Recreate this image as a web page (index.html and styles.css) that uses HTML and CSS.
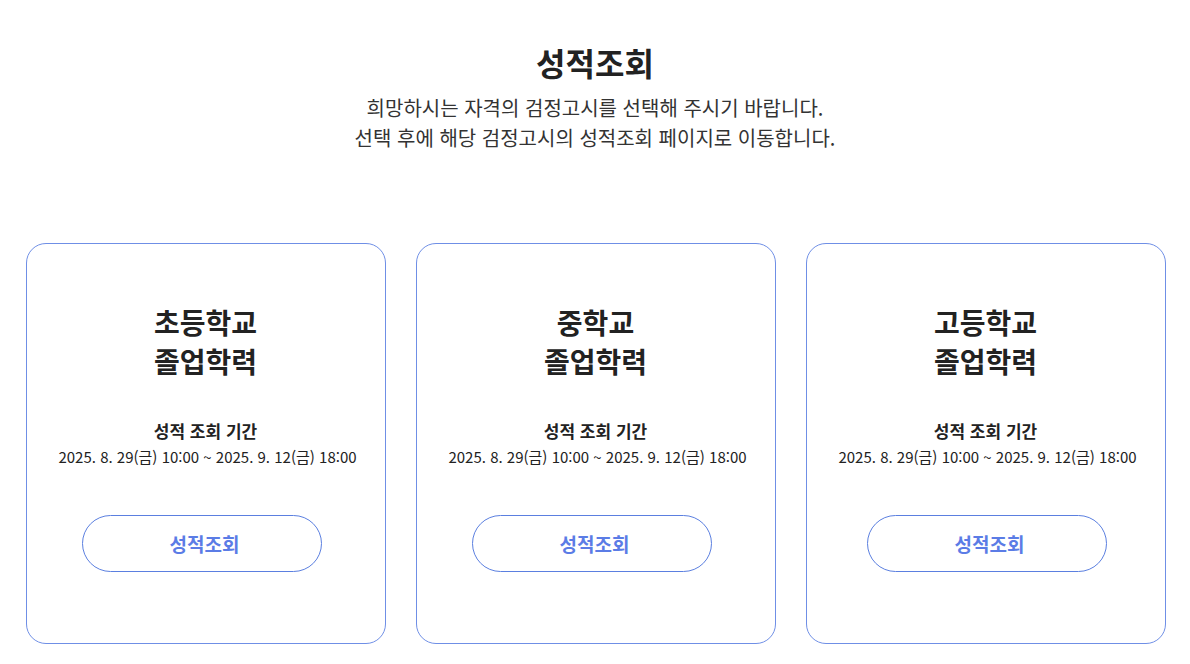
FILE: index.html
```html
<!DOCTYPE html>
<html lang="ko">
<head>
  <meta charset="UTF-8" />
  <meta name="viewport" content="width=device-width, initial-scale=1.0"/>
  <title>성적조회</title>
  <link rel="stylesheet" href="styles.css">
</head>
<body>
  <div class="page-head">
    <h1 class="page-title">성적조회</h1>
    <p class="page-desc">희망하시는 자격의 검정고시를 선택해 주시기 바랍니다.<br>선택 후에 해당 검정고시의 성적조회 페이지로 이동합니다.</p>
  </div>

  <div class="card-list">
    <div class="card">
      <h2 class="card-title">초등학교<br>졸업학력</h2>
      <div class="period">
        <strong class="period-label">성적 조회 기간</strong>
        <span class="period-date">2025. 8. 29(금) 10:00 ~ 2025. 9. 12(금) 18:00</span>
      </div>
      <a class="btn-result" href="#">성적조회</a>
    </div>

    <div class="card">
      <h2 class="card-title">중학교<br>졸업학력</h2>
      <div class="period">
        <strong class="period-label">성적 조회 기간</strong>
        <span class="period-date">2025. 8. 29(금) 10:00 ~ 2025. 9. 12(금) 18:00</span>
      </div>
      <a class="btn-result" href="#">성적조회</a>
    </div>

    <div class="card">
      <h2 class="card-title">고등학교<br>졸업학력</h2>
      <div class="period">
        <strong class="period-label">성적 조회 기간</strong>
        <span class="period-date">2025. 8. 29(금) 10:00 ~ 2025. 9. 12(금) 18:00</span>
      </div>
      <a class="btn-result" href="#">성적조회</a>
    </div>
  </div>
</body>
</html>
```

FILE: styles.css
```css
body {
  font-family: "Noto Sans CJK KR", "Noto Sans", sans-serif;
  color: #222;
  background: #fff;
  margin: 0;
  padding: 0;
}

.page-head {
  text-align: center;
  padding-top: 39px;
}

.page-title {
  margin: 0;
  font-size: 32px;
  line-height: 46px;
  font-weight: bold;
  color: #222;
}

.page-desc {
  margin: 8px 0 0;
  font-size: 20px;
  line-height: 30px;
  color: #333;
}

.card-list {
  display: flex;
  gap: 30px;
  width: 1140px;
  margin: 90px auto 0;
  padding-left: 1px;
}

.card {
  flex: 1;
  border: 1px solid #6f8fe6;
  border-radius: 20px;
  padding: 59px 20px 71px;
  text-align: center;
  box-sizing: border-box;
}

.card-title {
  margin: 0;
  font-size: 28px;
  line-height: 39px;
  font-weight: bold;
  color: #222;
}

.period {
  display: flex;
  flex-direction: column;
  margin-top: 37px;
}

.period-label {
  font-size: 17px;
  line-height: 26px;
  font-weight: bold;
  color: #222;
}

.period-date {
  font-size: 15px;
  line-height: 26px;
  color: #222;
  padding-left: 4px;
}

.btn-result {
  display: block;
  width: 240px;
  height: 57px;
  line-height: 55px;
  margin: 45px 0 0 35px;
  padding-left: 6px;
  border: 1px solid #5b7fe0;
  border-radius: 29px;
  box-sizing: border-box;
  font-size: 19px;
  font-weight: bold;
  color: #5b7ce6;
  text-decoration: none;
}

.card:last-child .btn-result {
  margin-left: 40px;
}
```
